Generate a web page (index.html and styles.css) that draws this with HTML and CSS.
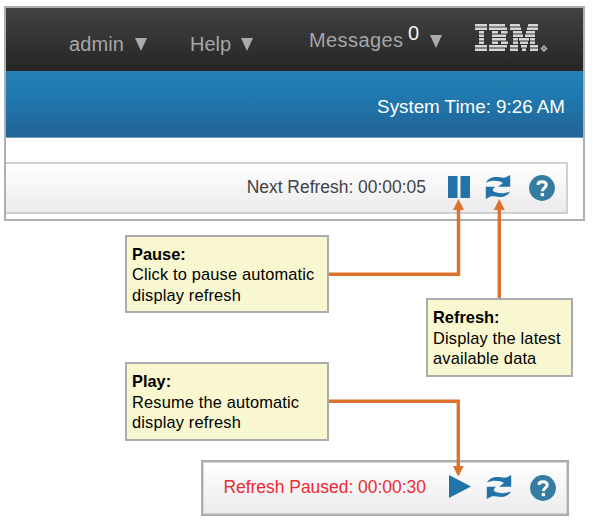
FILE: index.html
```html
<!DOCTYPE html>
<html lang="en">
<head>
<meta charset="utf-8">
<title>Refresh controls</title>
<link rel="stylesheet" href="styles.css">
</head>
<body>
<svg class="symbols" aria-hidden="true">
  <symbol id="refresh" viewBox="0 0 26 26">
    <path d="M1 8.6C3 4.8 7 3 11 3C15 3 18 4.2 21 3.3L25.2 1V12.7H13L18 9C14 6.4 7 6 1 8.6Z"/>
    <path d="M25 17.4C23 21.2 19 23 15 23C11 23 8 21.8 5 22.7L.8 25V12.7H10C8 14.5 7.5 15.7 8 17C12 19.6 19 20 25 17.4Z"/>
  </symbol>
  <symbol id="help" viewBox="0 0 26 26">
    <circle cx="13" cy="13" r="12.9" fill="#347ca1"/>
    <path d="M8.9 9.8C9.2 5.8 17.2 5.8 17.2 9.9C17.2 13 13.4 12.7 13.4 16.3" fill="none" stroke="#fff" stroke-width="3"/>
    <path d="M11.7 18.1h3.4v3.1h-3.4z" fill="#fff"/>
  </symbol>
</svg>
<main class="page">
  <section class="console">
    <header class="topbar">
      <span class="menu admin">admin<svg class="caret" viewBox="0 0 12 13"><path d="M0 0H12L6 13Z"/></svg></span>
      <span class="menu help">Help<svg class="caret" viewBox="0 0 12 13"><path d="M0 0H12L6 13Z"/></svg></span>
      <span class="menu messages"><span class="label">Messages</span><span class="count">0</span><svg class="caret" viewBox="0 0 12 13"><path d="M0 0H12L6 13Z"/></svg></span>
      <svg class="logo" viewBox="0 0 74 28" role="img" aria-label="IBM">
        <g fill="none" stroke="#d6d6d6" stroke-width="2.5">
          <path d="M0 1.2H12M14 1.2H30M35 1.2H45M53 1.2H63"/>
          <path d="M0 4.7H12M14 4.7H32M35 4.7H46M52 4.7H63"/>
          <path d="M4 8.2H9M17 8.2H23M26 8.2H32.5M38 8.2H47M51 8.2H60"/>
          <path d="M4 11.7H9M17 11.7H31M38 11.7H48M50 11.7H60"/>
          <path d="M4 15.2H9M17 15.2H31M38 15.2H43M44 15.2H54M55 15.2H60"/>
          <path d="M4 18.7H9M17 18.7H23M26 18.7H33M38 18.7H43M45 18.7H53M55 18.7H60"/>
          <path d="M0 22.2H12M14 22.2H32M35 22.2H43M46 22.2H52M55 22.2H63"/>
          <path d="M0 25.7H12M14 25.7H30M35 25.7H43M47 25.7H51M55 25.7H63"/>
        </g>
        <path d="M69 21.8L71.7 24.5L69 27.2L66.3 24.5Z" fill="#777" stroke="#b5b5b5" stroke-width="1.2"/>
      </svg>
    </header>
    <div class="timebar"><span>System Time: 9:26 AM</span></div>
    <div class="toolbar">
      <span class="status">Next Refresh: 00:00:05</span>
      <svg class="pause" viewBox="0 0 22 22"><path d="M0 0H9.5V22H0ZM12.5 0H22V22H12.5Z"/></svg>
      <svg class="refresh"><use href="#refresh"/></svg>
      <svg class="question"><use href="#help"/></svg>
    </div>
  </section>
  <section class="paused">
    <span class="status">Refresh Paused: 00:00:30</span>
    <svg class="play" viewBox="0 0 22 23"><path d="M0 0L22 11.5L0 23Z"/></svg>
    <svg class="refresh"><use href="#refresh"/></svg>
    <svg class="question"><use href="#help"/></svg>
  </section>
  <svg class="arrows" viewBox="0 0 593 523">
    <path class="line" d="M329 274.2H458.5V208M499.3 299V208M329 401.2H458.3V468"/>
    <path class="head" d="M458.5 199L464 210H453ZM499.3 199L504.8 210H493.8ZM458.3 476.5L463.8 466H452.8Z"/>
  </svg>
  <aside class="note note-pause"><b>Pause:</b><br>Click to pause automatic<br>display refresh</aside>
  <aside class="note note-refresh"><b>Refresh:</b><br>Display the latest<br>available data</aside>
  <aside class="note note-play"><b>Play:</b><br>Resume the automatic<br>display refresh</aside>
</main>
</body>
</html>
```
FILE: styles.css
```css
* { box-sizing: border-box; }
body {
  margin: 0;
  background: #fff;
  font-family: "Liberation Sans", Arial, sans-serif;
}
svg { display: block; flex: none; }
.symbols { position: absolute; width: 0; height: 0; }
.page {
  position: relative;
  width: 593px;
  height: 523px;
  padding: 6px 0 0 4px;
  overflow: hidden;
}
.console {
  width: 581px;
  height: 215px;
  border: 2px solid #adafb1;
}
.topbar {
  display: flex;
  height: 63px;
  padding-left: 63px;
  background: linear-gradient(#424345, #353535 45%, #272526);
  color: #a5a6a8;
  font-size: 20px;
  line-height: 24px;
}
.menu { display: flex; height: 24px; white-space: nowrap; }
.admin { width: 121px; margin-top: 24px; letter-spacing: .1px; }
.help { width: 119px; margin-top: 24px; }
.messages { width: 166px; margin-top: 20px; }
.messages .label { width: 99px; letter-spacing: .4px; }
.count { width: 22px; margin-top: -7px; color: #f3f3f3; }
.caret { width: 12px; height: 13px; margin: 6px 0 0 11px; fill: #a9abae; }
.help .caret { margin-left: 10px; }
.messages .caret { margin: 7px 0 0 0; }
.logo { width: 74px; height: 28px; margin-top: 16px; }
.timebar {
  display: flex;
  align-items: center;
  justify-content: flex-end;
  height: 67px;
  padding: 5px 18px 0 0;
  background: linear-gradient(#2582b5, #2078ae 40%, #206397);
  border-bottom: 1px solid #6c9ebd;
  color: #fff;
  font-size: 18.8px;
}
.toolbar {
  display: flex;
  justify-content: flex-end;
  width: 562px;
  height: 52px;
  margin-top: 24px;
  padding-right: 11px;
  border: 2px solid #cfd0d1;
  border-left: 0;
  background: linear-gradient(#fff, #ebebed);
}
.status {
  margin-top: 13px;
  color: #424244;
  font-size: 17.45px;
  line-height: 20px;
  white-space: nowrap;
}
.pause { width: 22px; height: 22px; margin: 12px 0 0 22px; fill: #2273a8; }
.refresh { width: 26px; height: 26px; margin: 10px 0 0 15px; fill: #2273a8; }
.question { width: 26px; height: 26px; margin: 11px 0 0 18px; }
.paused {
  display: flex;
  justify-content: flex-end;
  width: 368px;
  height: 56px;
  margin: 239px 0 0 197px;
  padding-right: 11px;
  border: 2px solid #abadaf;
  box-shadow: inset 0 0 0 1px #d5d6d7;
  background: linear-gradient(#fff, #ebebed);
}
.paused .status { margin-top: 15px; color: #ed2b32; }
.play { width: 22px; height: 23px; margin: 13px 0 0 23px; fill: #2273a8; }
.paused .refresh { margin-top: 12px; }
.paused .question { margin-top: 13px; }
.arrows { position: absolute; inset: 0; width: 593px; height: 523px; }
.line { fill: none; stroke: #db732f; stroke-width: 3.4; }
.head { fill: #db732f; }
.note {
  position: absolute;
  padding: 7px 5px;
  background: #f8f7cf;
  border: 2px solid #a9abad;
  color: #000;
  font-size: 16.4px;
  letter-spacing: .16px;
  line-height: 20.5px;
  white-space: nowrap;
}
.note b { letter-spacing: 0; }
.note-pause { left: 125px; top: 235px; width: 204px; height: 78px; padding-top: 6.6px; }
.note-refresh { left: 426px; top: 298px; width: 147px; height: 79px; padding-top: 7.4px; }
.note-play { left: 125px; top: 362px; width: 204px; height: 79px; padding-top: 7px; }
```
